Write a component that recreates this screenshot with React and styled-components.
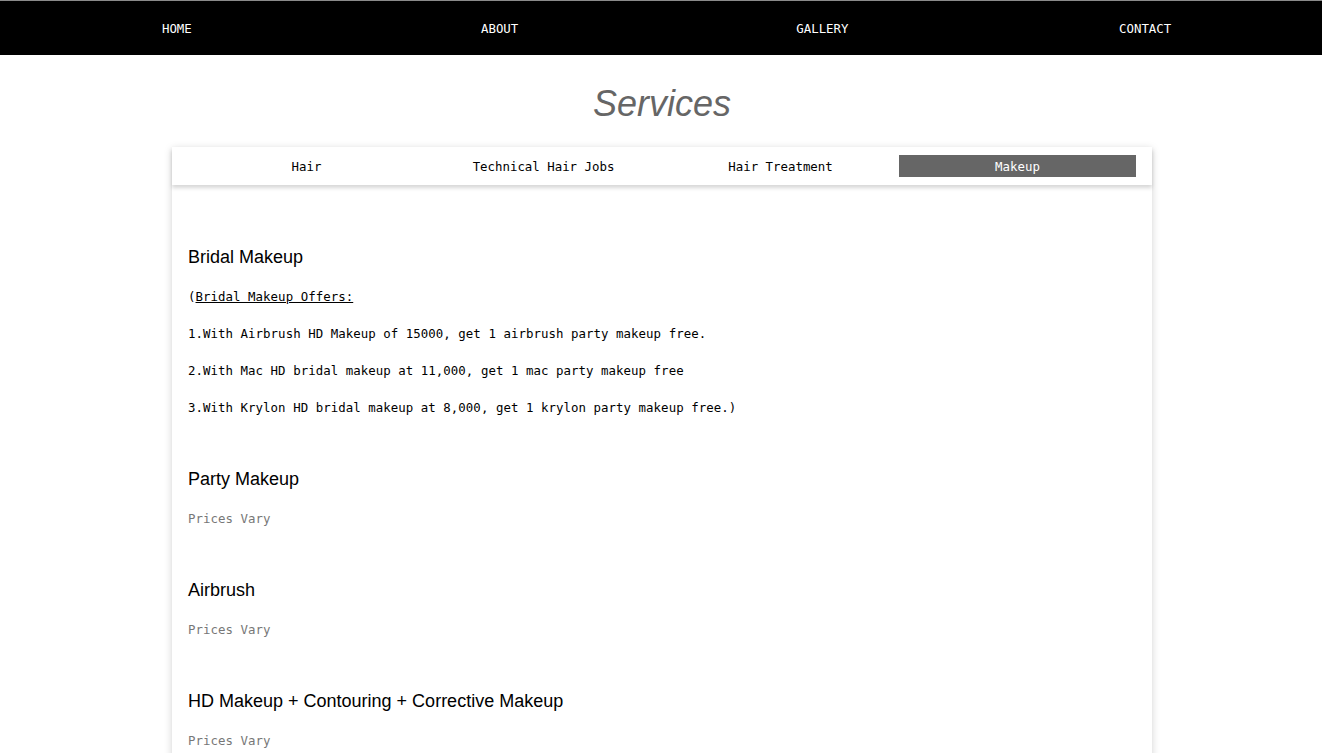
import React from "react";
import styled, { createGlobalStyle } from "styled-components";

const Global = createGlobalStyle`
  html, body { margin: 0; padding: 0; background: #fff; }
  body { font-family: "DejaVu Sans Mono", monospace; }
  * { box-sizing: border-box; }
`;

const Page = styled.div`
  padding-left: 2px;
`;

const Nav = styled.nav`
  height: 55px;
  margin-left: -2px;
  background: #000;
  border-top: 1px solid #8a8a8a;
  display: grid;
  grid-template-columns: repeat(4, 1fr);
  align-items: center;
  padding: 0 15.5px;
`;

const NavLink = styled.a`
  color: #fff;
  text-align: center;
  font-family: "DejaVu Sans Mono", monospace;
  font-size: 12.4px;
  text-decoration: none;
  line-height: 16px;
  padding-top: 1px;
`;

const Title = styled.h1`
  margin: 0;
  padding: 27px 0 21px;
  text-align: center;
  font-family: "Liberation Sans", Arial, sans-serif;
  font-style: italic;
  font-weight: normal;
  font-size: 36px;
  line-height: 44px;
  color: #666;
`;

const Card = styled.section`
  width: 980px;
  margin: 0 auto;
  background: #fff;
  box-shadow: 0 2px 8px rgba(0, 0, 0, 0.18);
  padding-bottom: 40px;
`;

const TabBar = styled.div`
  display: grid;
  grid-template-columns: repeat(4, 1fr);
  padding: 8px 16px;
  box-shadow: 0 3px 4px rgba(0, 0, 0, 0.16);
`;

const Tab = styled.button`
  border: none;
  background: ${(p) => (p.$active ? "#666" : "transparent")};
  color: ${(p) => (p.$active ? "#fff" : "#000")};
  font-family: "DejaVu Sans Mono", monospace;
  font-size: 12.4px;
  height: 22px;
  padding: 0;
  cursor: pointer;
`;

const Content = styled.div`
  padding: 61px 16px 0;
  display: flex;
  flex-direction: column;
  gap: 51px;
`;

const Item = styled.div`
  display: flex;
  flex-direction: column;
`;

const Heading = styled.h3`
  margin: 0 0 20px;
  font-family: "Liberation Sans", Arial, sans-serif;
  font-weight: normal;
  font-size: 18px;
  line-height: 22px;
  color: #000;
`;

const Para = styled.p`
  margin: 0 0 19px;
  font-family: "DejaVu Sans Mono", monospace;
  font-size: 12.4px;
  letter-spacing: 0.05px;
  line-height: 18px;
  color: ${(p) => (p.$muted ? "#777" : "#000")};
  &:last-child { margin-bottom: 0; }
`;

const U = styled.span`
  text-decoration: underline;
`;

const tabs = ["Hair", "Technical Hair Jobs", "Hair Treatment", "Makeup"];

const items = [
  { title: "Party Makeup" },
  { title: "Airbrush" },
  { title: "HD Makeup + Contouring + Corrective Makeup" },
];

export default function App() {
  return (
    <Page>
      <Global />
      <Nav>
        <NavLink>HOME</NavLink>
        <NavLink>ABOUT</NavLink>
        <NavLink>GALLERY</NavLink>
        <NavLink>CONTACT</NavLink>
      </Nav>
      <Title>Services</Title>
      <Card>
        <TabBar>
          {tabs.map((t) => (
            <Tab key={t} $active={t === "Makeup"}>
              {t}
            </Tab>
          ))}
        </TabBar>
        <Content>
          <Item>
            <Heading>Bridal Makeup</Heading>
            <Para>
              (<U>Bridal Makeup Offers:</U>
            </Para>
            <Para>1.With Airbrush HD Makeup of 15000, get 1 airbrush party makeup free.</Para>
            <Para>2.With Mac HD bridal makeup at 11,000, get 1 mac party makeup free</Para>
            <Para>3.With Krylon HD bridal makeup at 8,000, get 1 krylon party makeup free.)</Para>
          </Item>
          {items.map((it) => (
            <Item key={it.title}>
              <Heading>{it.title}</Heading>
              <Para $muted>Prices Vary</Para>
            </Item>
          ))}
        </Content>
      </Card>
    </Page>
  );
}
